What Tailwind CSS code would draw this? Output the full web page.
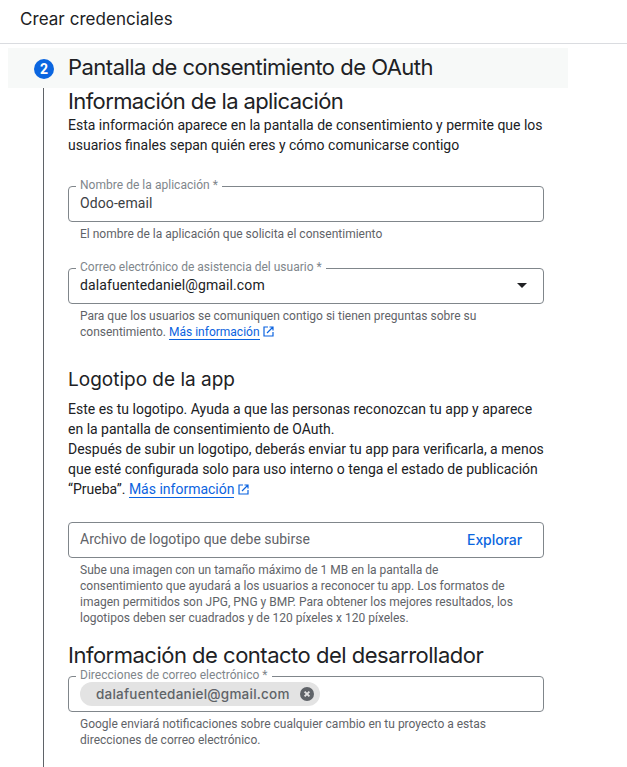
<!DOCTYPE html>
<html lang="es">
<head>
<meta charset="utf-8">
<title>Crear credenciales</title>
<script src="https://cdn.jsdelivr.net/npm/@tailwindcss/browser@4"></script>
</head>
<body class="bg-white font-['Roboto',sans-serif] text-[#202124] h-[767px] overflow-hidden whitespace-nowrap">
<header class="h-11 border-b border-[#dadce0] pl-5 flex items-start">
  <h1 class="font-['Inter',sans-serif] text-[17px] leading-[38px] tracking-[0.05px]"><span>Crear credenciales</span></h1>
</header>
<main class="mt-1 ml-2 w-[560px]">
  <div class="h-10 bg-[#f7f9f8] flex items-center pl-[26px]">
    <div class="size-5 mt-0.5 rounded-full bg-[#0b66e0] text-white text-sm font-bold flex items-center justify-center">2</div>
    <h2 class="ml-3.5 mb-0.5 font-['Inter',sans-serif] text-[22px] leading-7 tracking-[-0.52px]"><span>Pantalla de consentimiento de OAuth</span></h2>
  </div>
  <div class="ml-[35px] border-l border-[#5f6368] h-[679px] pl-6 pr-6">
    <h2 class="font-['Inter',sans-serif] text-[22px] leading-[27px] tracking-[-0.61px]"><span>Información de la aplicación</span></h2>
    <p class="text-sm leading-5"><span>Esta información aparece en la pantalla de consentimiento y permite que los</span><br><span>usuarios finales sepan quién eres y cómo comunicarse contigo</span></p>

    <div class="relative mt-[31px] h-9 w-[476px] border border-[#80868b] rounded-[4px] pl-[11px]">
      <label class="absolute left-[7px] -top-[10px] bg-white px-1 text-xs leading-4 tracking-[0.03px] text-[#80868b]"><span>Nombre de la aplicación *</span></label>
      <div class="text-sm leading-[33px] tracking-[0.1px] text-[#3c4043]"><span>Odoo-email</span></div>
    </div>
    <p class="mt-1 pl-3 text-xs leading-4 text-[#5f6368]"><span>El nombre de la aplicación que solicita el consentimiento</span></p>

    <div class="relative mt-[26px] h-9 w-[476px] border border-[#80868b] rounded-[4px] pl-[11px] pr-4 flex justify-between">
      <label class="absolute left-[7px] -top-[10px] bg-white px-1 text-xs leading-4 text-[#80868b]"><span>Correo electrónico de asistencia del usuario *</span></label>
      <div class="text-sm leading-[33px] tracking-[0.1px]"><span>dalafuentedaniel@gmail.com</span></div>
      <svg class="mt-[14px] w-[10px] h-[5px]" viewBox="0 0 10 5"><path d="M0 0h10L5 5z" fill="#202124"/></svg>
    </div>
    <p class="mt-1 pl-3 text-xs leading-4 text-[#5f6368]"><span>Para que los usuarios se comuniquen contigo si tienen preguntas sobre su</span><br><span>consentimiento.</span> <a class="text-[#0b63e0] border-b border-[#0b63e0]">Más información</a><svg class="inline-block ml-[3px] -mt-0.5 size-[11px]" viewBox="0 0 11 11" fill="none" stroke="#0b63e0" stroke-width="1.2"><path d="M5 1H1v9h9V6M6.5 1H10v3.5M10 1 4 7"/></svg></p>

    <h3 class="mt-7 font-['Inter',sans-serif] text-[19px] leading-6 tracking-[0px]"><span>Logotipo de la app</span></h3>
    <p class="mt-[7px] text-sm leading-5"><span>Este es tu logotipo. Ayuda a que las personas reconozcan tu app y aparece</span><br><span>en la pantalla de consentimiento de OAuth.</span><br><span>Después de subir un logotipo, deberás enviar tu app para verificarla, a menos</span><br><span>que esté configurada solo para uso interno o tenga el estado de publicación</span><br><span>“Prueba”.</span> <a class="text-[#0b63e0] border-b border-[#0b63e0]">Más información</a><svg class="inline-block ml-1 -mt-0.5 size-[11px]" viewBox="0 0 11 11" fill="none" stroke="#0b63e0" stroke-width="1.2"><path d="M5 1H1v9h9V6M6.5 1H10v3.5M10 1 4 7"/></svg></p>

    <div class="mt-[23px] h-9 w-[476px] border border-[#80868b] rounded-[4px] pl-[11px] pr-[21px] flex justify-between">
      <div class="text-sm leading-[33px] text-[#5f6368]"><span>Archivo de logotipo que debe subirse</span></div>
      <div class="font-['Inter',sans-serif] font-medium text-sm leading-[34px] tracking-[-0.08px] text-[#0b66e0]"><span>Explorar</span></div>
    </div>
    <p class="mt-1 pl-3 text-xs leading-4 text-[#5f6368]"><span>Sube una imagen con un tamaño máximo de 1 MB en la pantalla de</span><br><span>consentimiento que ayudará a los usuarios a reconocer tu app. Los formatos de</span><br><span>imagen permitidos son JPG, PNG y BMP. Para obtener los mejores resultados, los</span><br><span>logotipos deben ser cuadrados y de 120 píxeles x 120 píxeles.</span></p>

    <h2 class="mt-[15px] font-['Inter',sans-serif] text-[22px] leading-7 tracking-[-0.5px]"><span>Información de contacto del desarrollador</span></h2>
    <div class="relative mt-[7px] h-9 w-[476px] border border-[#80868b] rounded-[4px] pl-[11px] pt-[5px]">
      <label class="absolute left-[7px] -top-[10px] bg-white px-1 text-xs leading-4 tracking-[0.03px] text-[#80868b]"><span>Direcciones de correo electrónico *</span></label>
      <div class="relative w-60 h-6 rounded-full bg-[#e3e3e3] pl-4 pr-1.5 flex items-center justify-between">
        <span class="font-['Inter',sans-serif] font-medium text-[13.5px] leading-6 tracking-[0.23px] text-[#5f6368]">dalafuentedaniel@gmail.com</span>
        <svg class="size-[14px]" viewBox="0 0 14 14"><circle cx="7" cy="7" r="7" fill="#5f6368"/><path d="m4.6 4.6 4.8 4.8m0-4.8L4.6 9.4" stroke="#e3e3e3" stroke-width="1.9"/></svg>
      </div>
    </div>
    <p class="mt-1 pl-3 text-xs leading-4 text-[#5f6368]"><span>Google enviará notificaciones sobre cualquier cambio en tu proyecto a estas</span><br><span>direcciones de correo electrónico.</span></p>
  </div>
</main>
</body>
</html>
